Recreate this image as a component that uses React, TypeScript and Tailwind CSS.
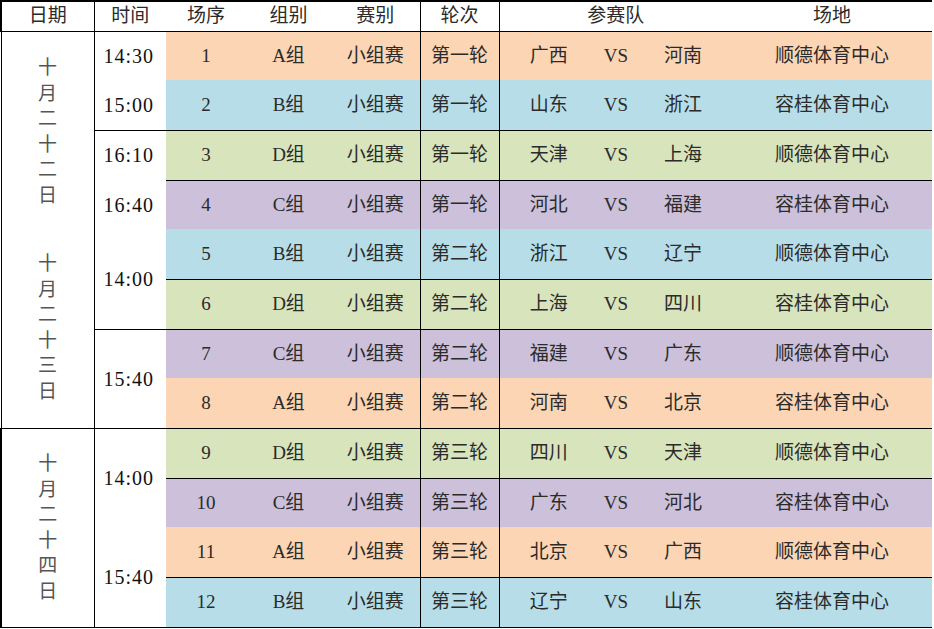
import React from "react";

type Row = {
  n: number;
  g: string;
  r: string;
  t1: string;
  t2: string;
  v: string;
  bg: string;
  bb: boolean;
  h: string;
  date?: { span: number; groups: string[]; b: string };
  time?: { text: string; span: number; bb: boolean };
};

const PEACH = "bg-[#fcd5b4]";
const BLUE = "bg-[#b7dee8]";
const GREEN = "bg-[#d8e4bc]";
const PURPLE = "bg-[#ccc0da]";

const rows: Row[] = [
  { n: 1, g: "A", r: "第一轮", t1: "广西", t2: "河南", v: "顺德体育中心", bg: PEACH, bb: false, h: "h-[49px]",
    date: { span: 8, groups: ["十月二十二日", "十月二十三日"], b: "border-l" },
    time: { text: "14:30", span: 1, bb: false } },
  { n: 2, g: "B", r: "第一轮", t1: "山东", t2: "浙江", v: "容桂体育中心", bg: BLUE, bb: true, h: "h-[50px]",
    time: { text: "15:00", span: 1, bb: true } },
  { n: 3, g: "D", r: "第一轮", t1: "天津", t2: "上海", v: "顺德体育中心", bg: GREEN, bb: true, h: "h-[50px]",
    time: { text: "16:10", span: 1, bb: false } },
  { n: 4, g: "C", r: "第一轮", t1: "河北", t2: "福建", v: "容桂体育中心", bg: PURPLE, bb: false, h: "h-[49px]",
    time: { text: "16:40", span: 1, bb: false } },
  { n: 5, g: "B", r: "第二轮", t1: "浙江", t2: "辽宁", v: "顺德体育中心", bg: BLUE, bb: true, h: "h-[50px]",
    time: { text: "14:00", span: 2, bb: true } },
  { n: 6, g: "D", r: "第二轮", t1: "上海", t2: "四川", v: "容桂体育中心", bg: GREEN, bb: true, h: "h-[50px]" },
  { n: 7, g: "C", r: "第二轮", t1: "福建", t2: "广东", v: "顺德体育中心", bg: PURPLE, bb: false, h: "h-[49px]",
    time: { text: "15:40", span: 2, bb: true } },
  { n: 8, g: "A", r: "第二轮", t1: "河南", t2: "北京", v: "容桂体育中心", bg: PEACH, bb: true, h: "h-[50px]" },
  { n: 9, g: "D", r: "第三轮", t1: "四川", t2: "天津", v: "顺德体育中心", bg: GREEN, bb: true, h: "h-[50px]",
    date: { span: 4, groups: ["十月二十四日"], b: "border-l-2" },
    time: { text: "14:00", span: 2, bb: false } },
  { n: 10, g: "C", r: "第三轮", t1: "广东", t2: "河北", v: "容桂体育中心", bg: PURPLE, bb: false, h: "h-[49px]" },
  { n: 11, g: "A", r: "第三轮", t1: "北京", t2: "广西", v: "顺德体育中心", bg: PEACH, bb: true, h: "h-[50px]",
    time: { text: "15:40", span: 2, bb: true } },
  { n: 12, g: "B", r: "第三轮", t1: "辽宁", t2: "山东", v: "容桂体育中心", bg: BLUE, bb: true, h: "h-[50px]" },
];

function DateText({ groups }: { groups: string[] }) {
  return (
    <div className="flex flex-col items-center justify-center gap-[43px]">
      {groups.map((g, i) => (
        <div key={i} className="flex flex-col items-center text-[19px] leading-[25.5px] text-[#555]">
          {Array.from(g).map((c, j) => (
            <span key={j}>{c}</span>
          ))}
        </div>
      ))}
    </div>
  );
}

export default function App() {
  const font = "font-['Liberation_Serif','Noto_Sans_CJK_SC',serif]";
  return (
    <div className={`bg-white w-[934px] h-[629px] ${font} text-[#2b2b2b]`}>
      <table className="table-fixed border-collapse w-[931px]">
        <colgroup>
          <col className="w-[93px]" />
          <col className="w-[72px]" />
          <col className="w-[80px]" />
          <col className="w-[85px]" />
          <col className="w-[89px]" />
          <col className="w-[79px]" />
          <col className="w-[99px]" />
          <col className="w-[36px]" />
          <col className="w-[98px]" />
          <col className="w-[200px]" />
        </colgroup>
        <thead>
          <tr className="h-[29px] text-[19px] font-normal">
            <th className="p-0 font-normal border-t-2 border-b border-l-2 border-r border-black">日期</th>
            <th className="p-0 font-normal border-t-2 border-b border-black">时间</th>
            <th className="p-0 font-normal border-t-2 border-b border-black">场序</th>
            <th className="p-0 font-normal border-t-2 border-b border-black">组别</th>
            <th className="p-0 font-normal border-t-2 border-b border-r border-black">赛别</th>
            <th className="p-0 font-normal border-t-2 border-b border-r border-black">轮次</th>
            <th colSpan={3} className="p-0 font-normal border-t-2 border-b border-black">参赛队</th>
            <th className="p-0 font-normal border-t-2 border-b border-black">场地</th>
          </tr>
        </thead>
        <tbody>
          {rows.map((row) => {
            const b = row.bb ? "border-b border-black" : "";
            return (
              <tr key={row.n} className={`${row.h} text-[19px]`}>
                {row.date && (
                  <td rowSpan={row.date.span} className={`p-0 align-middle bg-white border-r border-b border-black ${row.date.b}`}>
                    <DateText groups={row.date.groups} />
                  </td>
                )}
                {row.time && (
                  <td
                    rowSpan={row.time.span}
                    className={`p-0 pr-[3px] text-center align-middle bg-white text-[20px] tracking-[1px] text-[#111] ${row.time.bb ? "border-b border-black" : ""}`}
                  >
                    {row.time.text}
                  </td>
                )}
                <td className={`p-0 text-center ${row.bg} ${b}`}>{row.n}</td>
                <td className={`p-0 text-center ${row.bg} ${b}`}>{row.g}组</td>
                <td className={`p-0 text-center ${row.bg} ${b} border-r border-black`}>小组赛</td>
                <td className={`p-0 text-center ${row.bg} ${b} border-r border-black`}>{row.r}</td>
                <td className={`p-0 text-center ${row.bg} ${b}`}>{row.t1}</td>
                <td className={`p-0 text-center ${row.bg} ${b}`}>VS</td>
                <td className={`p-0 text-center ${row.bg} ${b}`}>{row.t2}</td>
                <td className={`p-0 text-center ${row.bg} ${b}`}>{row.v}</td>
              </tr>
            );
          })}
        </tbody>
      </table>
    </div>
  );
}
